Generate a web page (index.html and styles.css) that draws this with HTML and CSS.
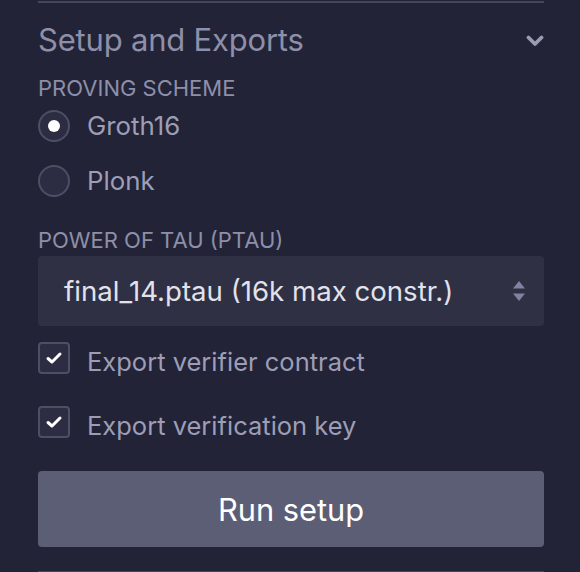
FILE: index.html
```html
<!DOCTYPE html>
<html>
<head>
<meta charset="utf-8">
<link rel="stylesheet" href="styles.css">
</head>
<body>
<div class="panel">
  <div class="section">
    <div class="header">
      <span class="title">Setup and Exports</span>
      <svg class="chevron" width="18" height="12" viewBox="0 0 18 12"><path d="M2.5 2.5 L9 9 L15.5 2.5" fill="none" stroke="#9a9bb3" stroke-width="3.8" stroke-linecap="round" stroke-linejoin="round"/></svg>
    </div>
    <div class="label first">PROVING SCHEME</div>
    <div class="radio-row">
      <span class="radio checked"><span class="dot"></span></span>
      <span class="opt">Groth16</span>
    </div>
    <div class="radio-row second">
      <span class="radio"></span>
      <span class="opt">Plonk</span>
    </div>
    <div class="label ptau">POWER OF TAU (PTAU)</div>
    <div class="select">
      <span class="select-text">final_14.ptau (16k max constr.)</span>
      <svg class="updown" width="14" height="24" viewBox="0 0 14 24"><path d="M7 2 L13 9.5 L1 9.5 Z" fill="#7f82a0"/><path d="M1 14.5 L13 14.5 L7 22 Z" fill="#7f82a0"/></svg>
    </div>
    <div class="check-row c1">
      <span class="check"><svg width="18" height="14" viewBox="0 0 18 14"><path d="M3 7.5 L7 11 L15 3" fill="none" stroke="#ffffff" stroke-width="3" stroke-linecap="round" stroke-linejoin="round"/></svg></span>
      <span class="opt">Export verifier contract</span>
    </div>
    <div class="check-row c2">
      <span class="check"><svg width="18" height="14" viewBox="0 0 18 14"><path d="M3 7.5 L7 11 L15 3" fill="none" stroke="#ffffff" stroke-width="3" stroke-linecap="round" stroke-linejoin="round"/></svg></span>
      <span class="opt">Export verification key</span>
    </div>
    <button class="run">Run setup</button>
  </div>
  <div class="bottom-line"></div>
</div>
</body>
</html>
```
FILE: styles.css
```css
html, body {
  margin: 0;
  padding: 0;
  background: #222336;
  font-family: Inter, "Noto Sans", "Liberation Sans", sans-serif;
}
.panel {
  width: 506px;
  margin: 0 36px 0 38px;
  padding-top: 1px;
}
.section {
  border-top: 2px solid #45465a;
  display: flex;
  flex-direction: column;
}
.header {
  margin-top: 20px;
  height: 34px;
  display: flex;
  align-items: center;
  justify-content: space-between;
}
.title {
  font-size: 31px;
  line-height: 34px;
  color: #8e8fa8;
  letter-spacing: -0.2px;
}
.chevron {
  margin-top: 2px;
}
.label {
  font-size: 22px;
  line-height: 24px;
  color: #8e8fa8;
}
.label.first { margin-top: 19px; }
.label.ptau { margin-top: 31px; }
.radio-row, .check-row {
  display: flex;
  align-items: center;
  height: 32px;
}
.radio-row { margin-top: 10px; }
.radio-row.second { margin-top: 23px; }
.radio-row .opt { margin-top: -2px; }
.check-row .opt { margin-top: 6px; font-size: 25.5px; }
.radio {
  width: 32px;
  height: 32px;
  box-sizing: border-box;
  border: 2px solid #4d4f66;
  border-radius: 50%;
  background: #2c2d42;
  display: flex;
  align-items: center;
  justify-content: center;
}
.dot {
  width: 12px;
  height: 12px;
  border-radius: 50%;
  background: #ffffff;
}
.opt {
  margin-left: 17px;
  font-size: 25.8px;
  color: #9d9eb6;
}
.select {
  margin-top: 4px;
  height: 70px;
  background: #2f3044;
  border-radius: 4px;
  display: flex;
  align-items: center;
  justify-content: space-between;
  padding: 0 18px 0 26px;
}
.select-text {
  font-size: 27.6px;
  color: #e2e2ec;
}
.check {
  width: 32px;
  height: 32px;
  box-sizing: border-box;
  border: 2px solid #4d4f66;
  border-radius: 4px;
  background: #2c2d42;
  display: flex;
  align-items: center;
  justify-content: center;
}
.check-row.c1 { margin-top: 16px; }
.check-row.c2 { margin-top: 32px; }
.run {
  margin-top: 33px;
  height: 76px;
  border: none;
  border-radius: 4px;
  background: #5c5e76;
  color: #ffffff;
  font-family: Inter, "Noto Sans", "Liberation Sans", sans-serif;
  font-size: 30.8px;
  padding: 0;
}
.bottom-line {
  margin-top: 24px;
  height: 1px;
  background: #45465a;
}
```
